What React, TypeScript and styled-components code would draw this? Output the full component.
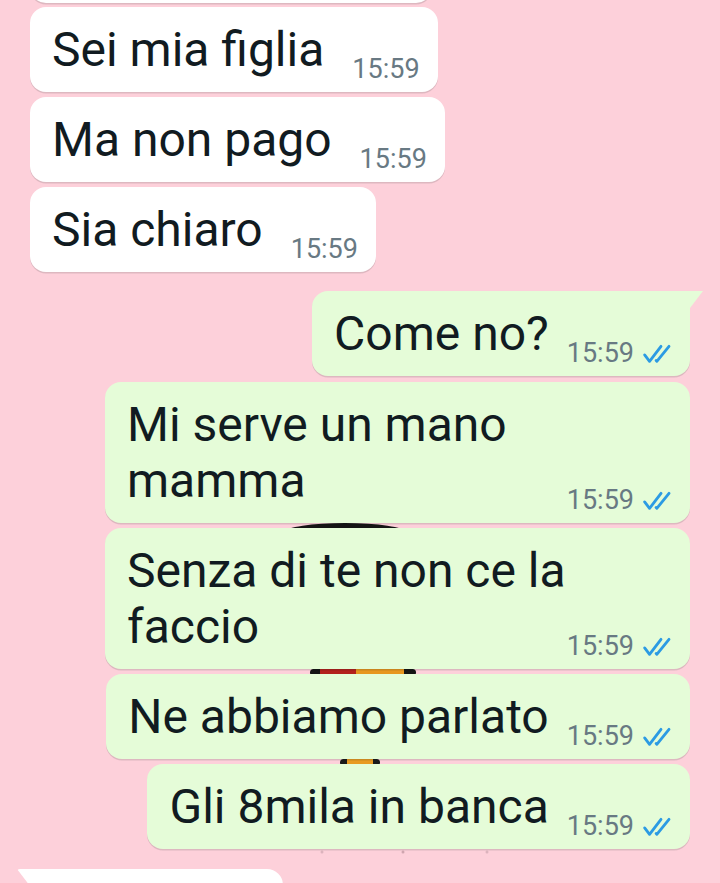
import React from 'react'
import styled, { createGlobalStyle, css } from 'styled-components'

const PINK = '#fdd0da'

const GlobalStyle = createGlobalStyle`
	html, body {
		margin: 0;
		padding: 0;
	}
	body {
		background: ${PINK};
		font-family: Roboto, 'Noto Sans', 'Liberation Sans', sans-serif;
		overflow: hidden;
	}
`

const Screen = styled.div`
	position: relative;
	width: 720px;
	height: 883px;
	overflow: hidden;
	background: ${PINK};
`

// bits of a sticker that sits behind the bubbles and shows in the gaps
const Backdrop = styled.svg`
	position: absolute;
	left: 0;
	top: 0;
	z-index: 0;
`

const Thread = styled.div`
	position: relative;
	z-index: 1;
	display: flex;
	flex-direction: column;
	padding: 0 30px;
`

const Row = styled.div<{ $out?: boolean; $gap: number }>`
	display: flex;
	justify-content: ${(p) => (p.$out ? 'flex-end' : 'flex-start')};
	margin-top: ${(p) => p.$gap}px;
`

const tailIn = css`
	border-top-left-radius: 0;
	&::before {
		content: '';
		position: absolute;
		left: -13px;
		top: 0;
		width: 13px;
		height: 17px;
		background: inherit;
		clip-path: polygon(0 0, 100% 0, 100% 100%);
		border-top-left-radius: 3px;
	}
`

const tailOut = css`
	border-top-right-radius: 0;
	&::after {
		content: '';
		position: absolute;
		right: -13px;
		top: 0;
		width: 13px;
		height: 17px;
		background: inherit;
		clip-path: polygon(0 0, 100% 0, 0 100%);
	}
`

const Bubble = styled.div<{ $out?: boolean; $tail?: boolean }>`
	position: relative;
	max-width: 545px;
	padding: 15px 18px 14px 22px;
	background: ${(p) => (p.$out ? '#e5fcd8' : '#ffffff')};
	border-radius: 16px;
	box-shadow: 0 1.5px 0.5px rgba(11, 20, 26, 0.13);
	color: #111b21;
	font-size: 48px;
	line-height: 56px;
	${(p) => p.$tail && (p.$out ? tailOut : tailIn)}
`

const Clipped = styled.div<{ $width: number; $tail?: boolean }>`
	position: relative;
	width: ${(p) => p.$width}px;
	height: 60px;
	background: #ffffff;
	border-radius: 16px;
	box-shadow: 0 1.5px 0.5px rgba(11, 20, 26, 0.13);
	${(p) => p.$tail && tailIn}
`

const Text = styled.span``

const Meta = styled.span<{ $out?: boolean }>`
	float: right;
	height: 56px;
	margin-left: ${(p) => (p.$out ? 18 : 28)}px;
	display: flex;
	align-items: flex-end;
	gap: 8px;
	position: relative;
	top: 5px;
	color: #687983;
	font-size: 27px;
	line-height: 1;
`

const Ticks = styled.svg`
	width: 30px;
	height: 20px;
	margin-bottom: 3px;
	color: #2c9be3;
`

const DoubleTick = () => (
	<Ticks viewBox="0 0 16 11" fill="none" stroke="currentColor" strokeWidth="1.55" strokeLinecap="round" strokeLinejoin="round">
		<path d="M1.2 6 L3.9 9.5 L10.2 1.3" />
		<path d="M7.5 9.1 L7.9 9.5 L14.6 1.3" />
	</Ticks>
)

type Msg = { text: string; out?: boolean; gap: number; tail?: boolean }

const messages: Msg[] = [
	{ text: 'Sei mia figlia', gap: 4 },
	{ text: 'Ma non pago', gap: 5 },
	{ text: 'Sia chiaro', gap: 5 },
	{ text: 'Come no?', out: true, tail: true, gap: 19 },
	{ text: 'Mi serve un mano mamma', out: true, gap: 6 },
	{ text: 'Senza di te non ce la faccio', out: true, gap: 5 },
	{ text: 'Ne abbiamo parlato', out: true, gap: 5 },
	{ text: 'Gli 8mila in banca', out: true, gap: 5 }
]

const App = () => {
	return (
		<Screen>
			<GlobalStyle />
			<Backdrop width="720" height="883">
				<ellipse cx="345" cy="532" rx="60" ry="9" fill="#141414" />
				<rect x="310" y="669" width="106" height="7" rx="3.5" fill="#141414" />
				<rect x="320" y="669" width="36" height="7" fill="#b3201c" />
				<rect x="356" y="669" width="48" height="7" fill="#e7961f" />
				<rect x="340" y="759" width="40" height="7" rx="3.5" fill="#1a1a1a" />
				<rect x="347" y="759" width="26" height="7" fill="#e89a22" />
				<circle cx="322" cy="852" r="1.5" fill="#dcb3bd" />
				<circle cx="403" cy="852" r="1.5" fill="#cfa5af" />
				<circle cx="487" cy="852" r="1.5" fill="#dcb3bd" />
			</Backdrop>
			<Thread>
				<Row $gap={-57}>
					<Clipped $width={402} />
				</Row>
				{messages.map((m, i) => (
					<Row key={i} $out={m.out} $gap={m.gap}>
						<Bubble $out={m.out} $tail={m.tail}>
							<Text>{m.text}</Text>
							<Meta $out={m.out}>
								15:59
								{m.out && <DoubleTick />}
							</Meta>
						</Bubble>
					</Row>
				))}
				<Row $gap={20}>
					<Clipped $width={253} $tail />
				</Row>
			</Thread>
		</Screen>
	)
}

export default App
